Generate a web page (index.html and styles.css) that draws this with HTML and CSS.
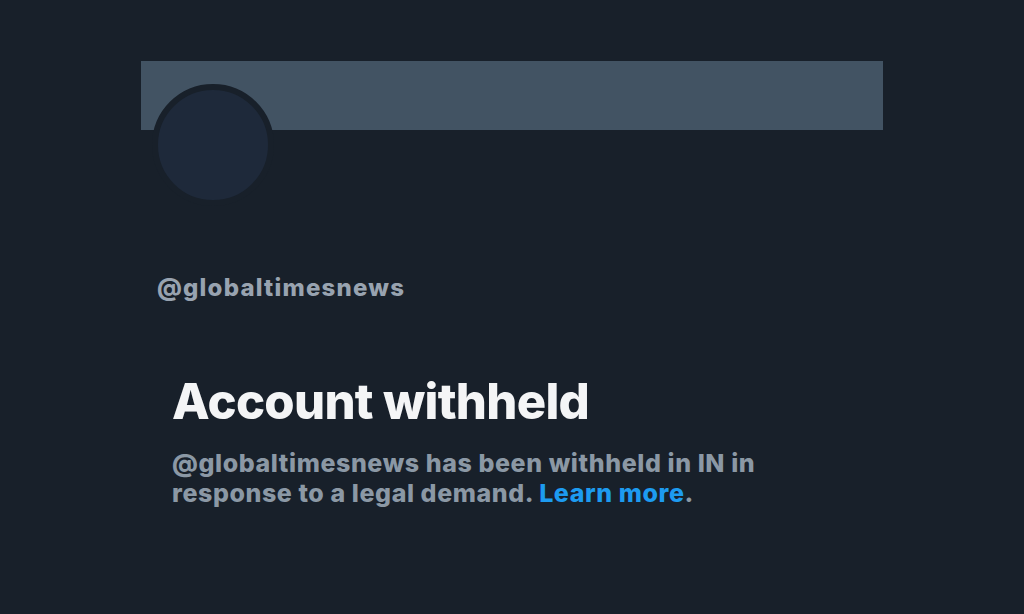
FILE: index.html
```html
<!DOCTYPE html>
<html lang="en">

<head>
    <meta charset="utf-8">
    <meta name="viewport" content="width=device-width, initial-scale=1.0">
    <title>@globaltimesnews</title>
    <link rel="stylesheet" href="styles.css">
</head>

<body>
    <div class="profil">
        <div class="banner"></div>
        <div class="avatar"></div>
        <p class="handle">@globaltimesnews</p>

        <div class="withheld">
            <h1>Account withheld</h1>
            <p>@globaltimesnews has been withheld in IN in<br>response to a legal demand. <a href="#">Learn more</a>.</p>
        </div>
    </div>
</body>

</html>
```

FILE: styles.css
```css
body {
    margin: 0;
    background-color: #18202a;
    font-family: Inter, "Noto Sans", sans-serif;
}

.profil {
    width: 742px;
    margin-left: 141px;
    padding-top: 61px;
}

.banner {
    height: 69px;
    background-color: #425363;
}

.avatar {
    width: 110px;
    height: 110px;
    margin-top: -46px;
    margin-left: 11px;
    border-radius: 50%;
    border: 6px solid #18202a;
    background-color: #1e293a;
}

.handle {
    margin: 0;
    margin-top: 67px;
    margin-left: 16px;
    font-size: 24px;
    line-height: 30px;
    font-weight: 800;
    letter-spacing: 1.2px;
    color: #98a3b0;
}

.withheld {
    margin-top: 71px;
    margin-left: 31px;
    width: 640px;
}

.withheld h1 {
    margin: 0;
    font-size: 49px;
    line-height: 56px;
    font-weight: 800;
    letter-spacing: -0.7px;
    color: #f4f5f6;
}

.withheld p {
    margin: 0;
    margin-top: 18px;
    font-size: 25px;
    font-weight: 800;
    line-height: 30px;
    letter-spacing: 0.58px;
    color: #8b98a5;
}

.withheld a {
    color: #1d9bf0;
    text-decoration: none;
}
```
